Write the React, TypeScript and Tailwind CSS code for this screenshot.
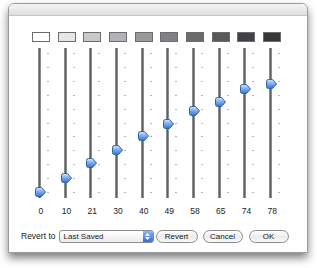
import React from "react";

const levels = [0, 10, 21, 30, 40, 49, 58, 65, 74, 78];
const ticks = Array.from({ length: 11 }, (_, i) => i);

function Knob() {
  return (
    <svg width="11" height="10" viewBox="0 0 11 10">
      <defs>
        <linearGradient id="knob" x1="0" y1="0" x2="0" y2="1">
          <stop offset="0" stopColor="#d6e7fc" />
          <stop offset="0.45" stopColor="#7fb0ef" />
          <stop offset="1" stopColor="#3173d6" />
        </linearGradient>
      </defs>
      <path
        d="M2.5 0.5 H6.5 L10.5 5 L6.5 9.5 H2.5 Q0.5 9.5 0.5 7.5 V2.5 Q0.5 0.5 2.5 0.5 Z"
        fill="url(#knob)"
        stroke="#35609f"
        strokeWidth="1"
      />
    </svg>
  );
}

function Slider({ value }: { value: number }) {
  // value 0 sits on the lowest tick, 100 on the highest
  const center = 5 + (1 - value / 100) * 139;
  return (
    <div className="relative h-[150px] w-[18px]">
      <div className="absolute left-[6px] top-0 h-full w-[3px] bg-gradient-to-r from-[#a4a4a4] via-[#606060] to-[#a4a4a4]" />
      {ticks.map((i) => (
        <div
          key={i}
          className="absolute left-[15px] h-px w-[2px] bg-[#b4b4b4]"
          style={{ top: 5 + i * 13.9 }}
        />
      ))}
      <div className="absolute left-[3px]" style={{ top: center - 5 }}>
        <Knob />
      </div>
    </div>
  );
}

function Swatch({ value }: { value: number }) {
  const g = Math.round(255 * (1 - value / 100));
  return (
    <div
      className="h-[10px] w-[18px] border border-[#6c6c6c]"
      style={{ backgroundColor: `rgb(${g}, ${g}, ${Math.min(255, g + 4)})` }}
    />
  );
}

function PillButton({ label, width }: { label: string; width: string }) {
  return (
    <div
      className={`flex h-[13px] ${width} items-center justify-center rounded-full border border-[#8c8c8c] bg-gradient-to-b from-[#ffffff] via-[#ececec] to-[#f8f8f8] text-[8px] text-[#1a1a1a]`}
    >
      {label}
    </div>
  );
}

export default function App() {
  return (
    <div className="h-[268px] w-[317px] bg-white pl-[8px] pt-[3px] font-['Liberation_Sans',Arial,sans-serif]">
      <div className="flex h-[250px] w-[300px] flex-col rounded-t-[6px] border border-[#9c9c9c] bg-white shadow-[0_5px_8px_rgba(0,0,0,0.5)]">
        <div className="h-[12px] shrink-0 rounded-t-[5px] border-b border-[#c6c6c6] bg-gradient-to-b from-[#f4f4f4] to-[#dedede]" />

        <div className="grid w-[276px] shrink-0 grid-cols-10 pl-[19px] pt-[16px]">
          {levels.map((v) => (
            <div key={v} className="flex flex-col items-center">
              <Swatch value={v} />
              <div className="mt-[6px]">
                <Slider value={v} />
              </div>
              <div className="mt-[8px] h-[10px] text-[8.5px] leading-[10px] text-[#1a1a1a]">
                {v}
              </div>
            </div>
          ))}
        </div>

        <div className="mt-[14px] flex shrink-0 items-center pl-[12px]">
          <span className="whitespace-nowrap text-[8.5px] leading-[13px] text-[#1a1a1a]">
            Revert to
          </span>
          <div className="ml-[3px] flex h-[13px] w-[95px] items-center overflow-hidden rounded-[3px] border border-[#8c8c8c] bg-gradient-to-b from-[#ffffff] to-[#ececec]">
            <span className="flex-1 whitespace-nowrap pl-[4px] text-[8px] leading-[11px] text-[#1a1a1a]">
              Last Saved
            </span>
            <div className="flex h-full w-[10px] flex-col items-center justify-center gap-[1px] bg-gradient-to-b from-[#8cb8f2] to-[#2f6ed4]">
              <svg width="5" height="3" viewBox="0 0 5 3">
                <path d="M2.5 0 L5 3 H0 Z" fill="#ffffff" />
              </svg>
              <svg width="5" height="3" viewBox="0 0 5 3">
                <path d="M0 0 H5 L2.5 3 Z" fill="#ffffff" />
              </svg>
            </div>
          </div>
          <div className="ml-[2px]">
            <PillButton label="Revert" width="w-[42px]" />
          </div>
          <div className="ml-[5px]">
            <PillButton label="Cancel" width="w-[40px]" />
          </div>
          <div className="ml-[6px]">
            <PillButton label="OK" width="w-[40px]" />
          </div>
        </div>
      </div>
    </div>
  );
}
